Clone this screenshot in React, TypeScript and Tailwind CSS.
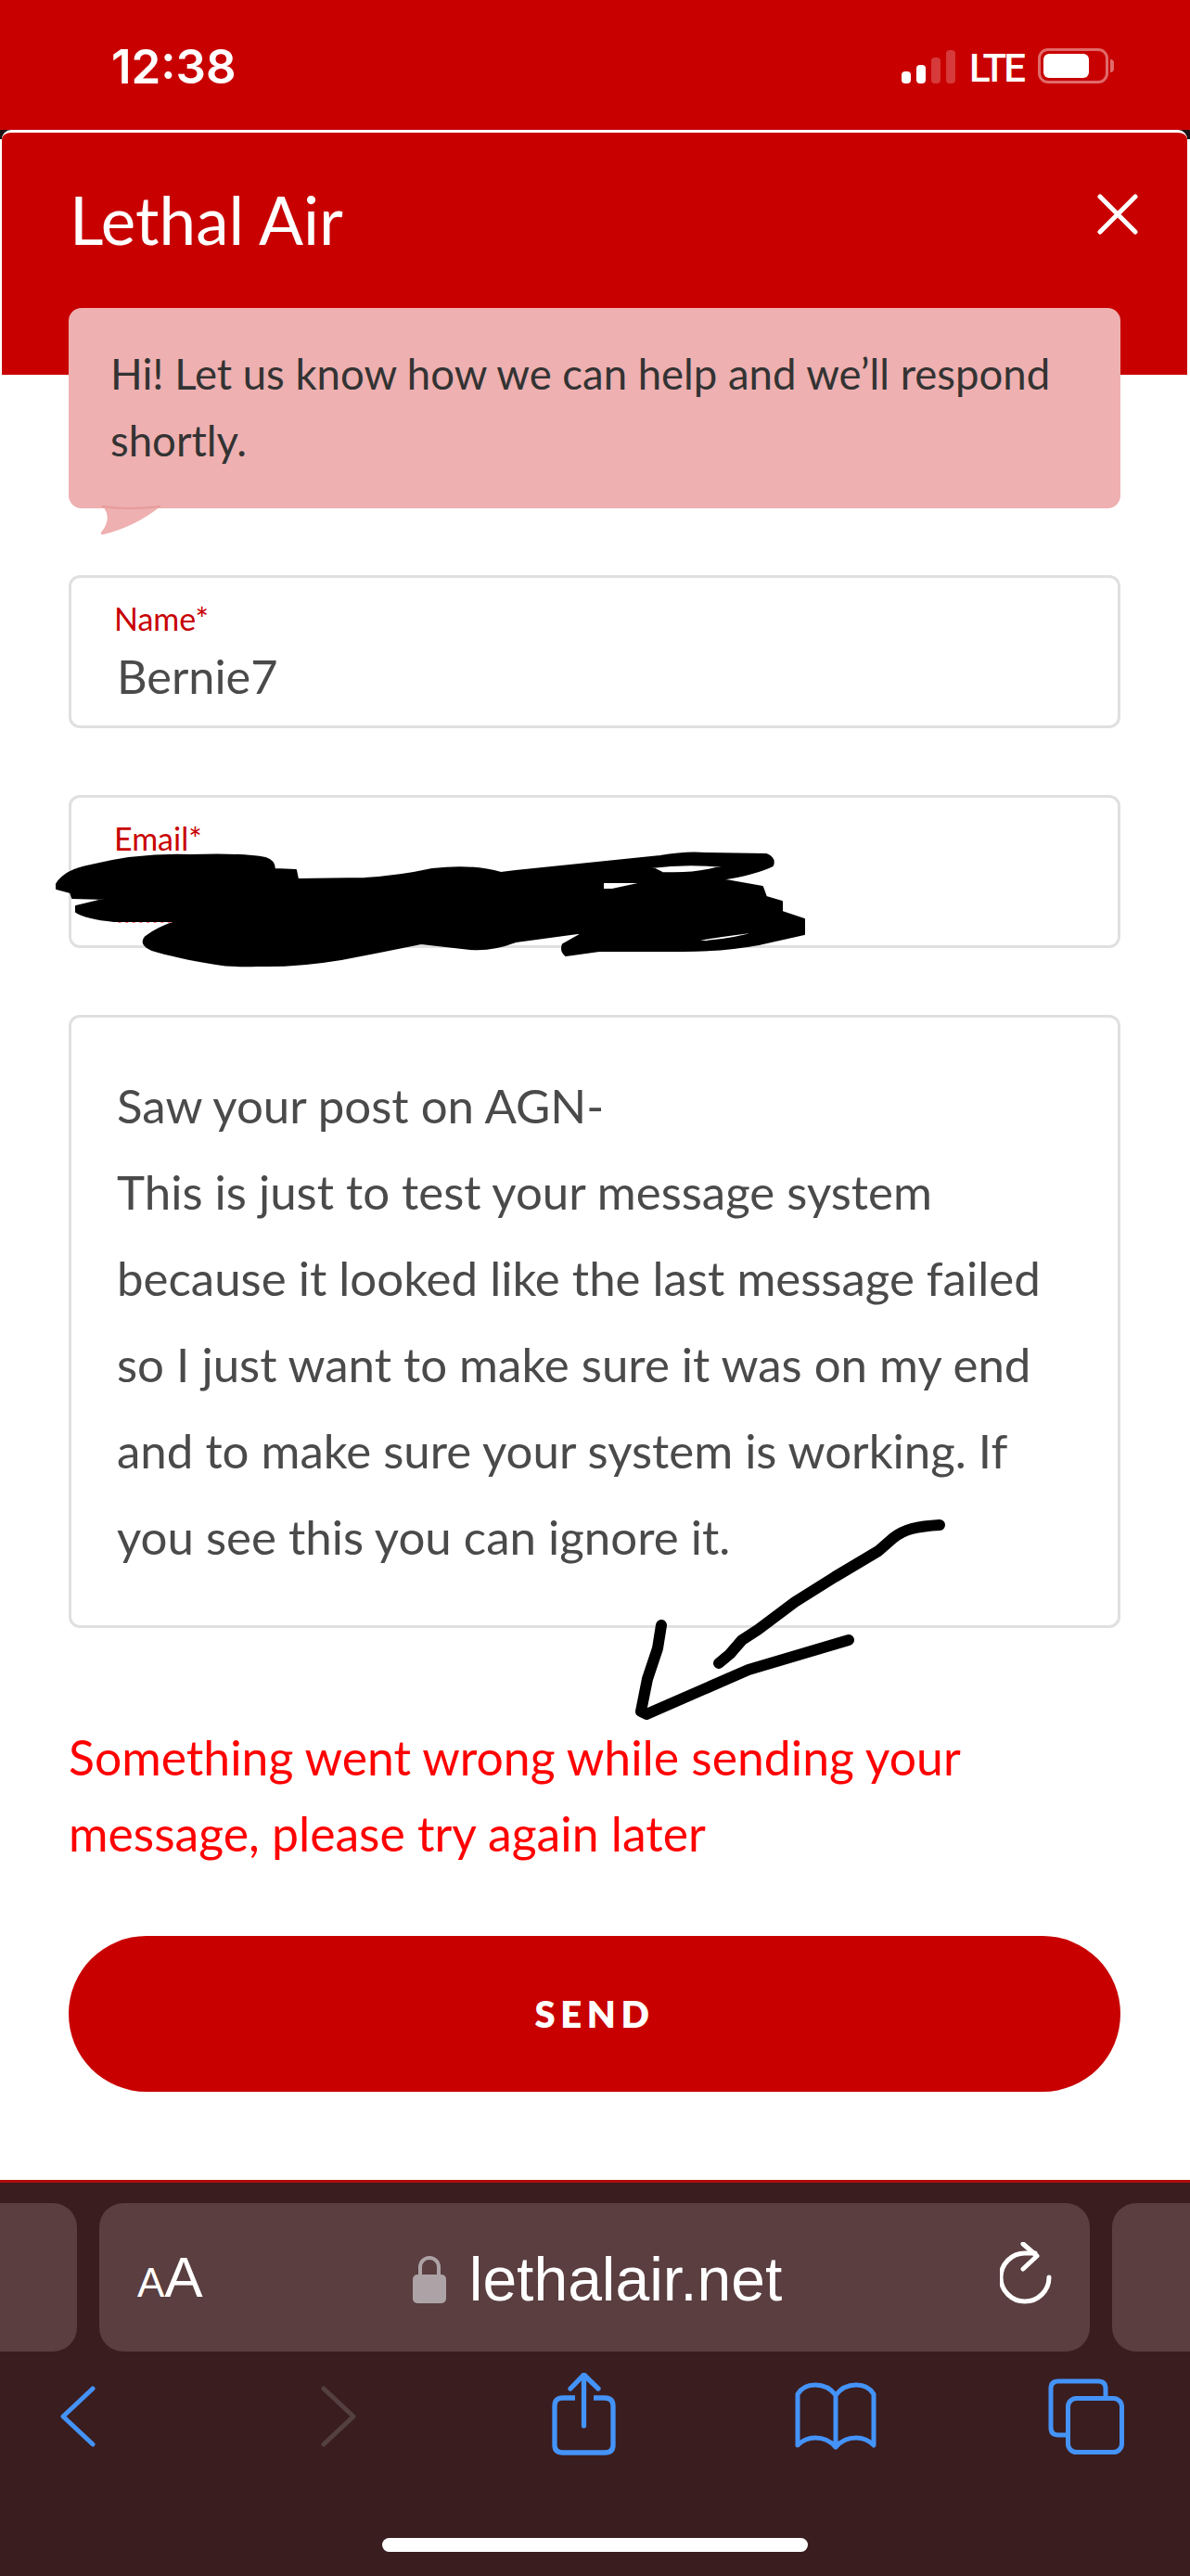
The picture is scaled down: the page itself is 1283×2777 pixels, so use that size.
const RED = 'bg-[#c80000]'

function Scribble() {
  return (
    <svg className="absolute left-0 top-[900px] pointer-events-none" width="900" height="150" viewBox="0 900 900 150">
      <path
        fillRule="evenodd"
        fill="#000"
        stroke="#000"
        strokeWidth="2"
        strokeLinejoin="round"
        d="M61 953 Q70 938 98 933 Q150 920 205 922 Q260 920 286 925 Q296 928 296 937 L319 938 L321 948 L393 947 Q430 945 466 937 Q510 932 540 941 L556 939 L712 923 Q740 918 761 920 L826 921 Q836 925 833 933 Q815 942 777 948 L822 956 L826 967 L843 972 L843 983 L867 991 L867 1007 Q845 1012 818 1018 Q780 1025 736 1025 L646 1025 L610 1030 Q604 1025 607 1018 L630 1005 L556 1015 Q530 1025 507 1023 Q480 1020 454 1017 Q410 1026 368 1034 Q320 1042 278 1041 Q250 1042 233 1039 Q190 1032 164 1024 Q150 1018 157 1010 Q170 1000 192 993 L123 993 Q92 990 82 983 L82 977 L115 969 L78 968 L76 962 L61 958 Z
           M702 935 Q740 930 779 934 Q750 943 714 941 Z
           M650 951 L697 951 L660 959 L650 959 Z
           M745 1014 Q790 1007 820 1004 Q790 1013 760 1015 Z"
      />
    </svg>
  )
}

function HandArrow() {
  return (
    <svg className="absolute left-[660px] top-[1620px] pointer-events-none" width="380" height="250" viewBox="660 1620 380 250" fill="none" stroke="#000" strokeWidth="12" strokeLinecap="round" strokeLinejoin="round">
      <path d="M1013 1644 Q995 1645 983 1648 Q972 1651 963 1658 L947 1672 L900 1700 L857 1727 L817 1757 L800 1768 L787 1783 L775 1793" />
      <path d="M713 1752 L709 1777 L698 1810 L691 1845 L697 1848 L807 1800 L915 1768" />
    </svg>
  )
}

function Field({ label, value }: { label: string; value?: string }) {
  return (
    <div className="h-[165px] border-[3px] border-[#e0e0e0] rounded-xl pl-[46px] pt-[24px] bg-white">
      <div className="text-[34px] leading-[40px] text-[#c80000]">{label}</div>
      <div className="text-[50.5px] leading-[60px] mt-[12px] ml-[3px] text-[#4a4a4a]">{value}</div>
    </div>
  )
}

function SafariBar() {
  return (
    <div className="h-[427px] bg-[#3a1d1f] border-t-[3px] border-[#b00d0d] font-['Liberation_Sans',sans-serif]">
      <div className="flex mt-[22px] h-[160px] gap-[24px]">
        <div className="w-[83px] shrink-0 bg-[#5a3e40] rounded-r-[26px]" />
        <div className="w-[1068px] shrink-0 bg-[#5a3e40] rounded-[26px] flex items-center relative">
          <div className="flex items-baseline ml-[41px] text-white">
            <span className="text-[44px] leading-none">A</span>
            <span className="text-[62px] leading-none">A</span>
          </div>
          <div className="flex items-center ml-[226px] mt-[4px] gap-[25px]">
            <svg width="36" height="52" viewBox="0 0 36 52">
              <path d="M8 24 V13 a10 10 0 0 1 20 0 V24" fill="none" stroke="#ada3a6" strokeWidth="4" />
              <rect x="0" y="21" width="36" height="31" rx="5" fill="#ada3a6" />
            </svg>
            <span className="text-[66px] leading-none text-white">lethalair.net</span>
          </div>
          <svg className="absolute left-[971px] top-[42px]" width="58" height="68" viewBox="0 0 58 68" fill="none" stroke="#fff" strokeWidth="5" strokeLinecap="round" strokeLinejoin="round">
            <path d="M53 38 A26 26 0 1 1 27 12 H38" />
            <path d="M25 2 L40 15 L25 29" />
          </svg>
        </div>
        <div className="flex-1 bg-[#5a3e40] rounded-l-[26px]" />
      </div>
      <div className="flex items-start ml-[65px] mt-[23px] h-[90px]">
        <svg className="mt-[14px]" width="38" height="66" viewBox="0 0 38 66" fill="none" stroke="#4493f8" strokeWidth="5" strokeLinecap="round" strokeLinejoin="round">
          <path d="M35 3 L3 33 L35 63" />
        </svg>
        <svg className="mt-[14px] ml-[243px]" width="38" height="66" viewBox="0 0 38 66" fill="none" stroke="#54403f" strokeWidth="5" strokeLinecap="round" strokeLinejoin="round">
          <path d="M3 3 L35 33 L3 63" />
        </svg>
        <svg className="ml-[211px]" width="69" height="89" viewBox="0 0 69 89" fill="none" stroke="#4493f8" strokeWidth="5.3" strokeLinejoin="round">
          <path d="M25 27 H12 Q3 27 3 36 V78 Q3 86 12 86 H57 Q66 86 66 78 V36 Q66 27 57 27 H45" />
          <path strokeLinecap="round" d="M34.5 57 V3 M20 17 L34.5 2 L50 17" />
        </svg>
        <svg className="mt-[10px] ml-[193px]" width="88" height="74" viewBox="0 0 88 74" fill="none" stroke="#4493f8" strokeWidth="5" strokeLinecap="round" strokeLinejoin="round">
          <path d="M44 14 C38 6 30 3 22 3 C14 3 7 6 3 13 V68 C8 63 15 60 22 60 C30 60 38 63 44 70 C50 63 58 60 66 60 C73 60 80 63 85 68 V13 C81 6 74 3 66 3 C58 3 50 6 44 14 V70" />
        </svg>
        <svg className="mt-[6px] ml-[185px]" width="83" height="82" viewBox="0 0 83 82" fill="none" stroke="#4493f8" strokeWidth="5" strokeLinejoin="round">
          <path d="M62 19 V11 Q62 3 54 3 H11 Q3 3 3 11 V53 Q3 61 11 61 H20" />
          <rect x="21.5" y="21.5" width="58" height="58" rx="9" />
        </svg>
      </div>
      <div className="mt-[88px] ml-[412px] w-[459px] h-[15px] rounded-full bg-white" />
    </div>
  )
}

export default function App() {
  return (
    <div className="w-[1283px] h-[2777px] relative flex flex-col overflow-hidden bg-white font-['Lato','Noto_Sans',sans-serif]">
      <div className={`${RED} h-[140px] flex items-center justify-between pl-[120px] pr-[82px] font-['Inter',sans-serif] text-white`}>
        <span className="text-[51px] font-semibold leading-none mt-[2px]">12:38</span>
        <div className="flex items-end mt-[2px]">
          <div className="flex items-end gap-[6px]">
            <i className="w-[10px] h-[13px] rounded-[4px] bg-white" />
            <i className="w-[10px] h-[20px] rounded-[4px] bg-white" />
            <i className="w-[10px] h-[28px] rounded-[4px] bg-[#d63a3a]" />
            <i className="w-[10px] h-[36px] rounded-[4px] bg-[#d63a3a]" />
          </div>
          <span className="ml-[15px] w-[59px] text-[42px] leading-[32px] font-medium tracking-[-3px] font-['Roboto',sans-serif]">LTE</span>
          <div className="ml-[15px] w-[76px] h-[38px] border-[3px] border-[#e06a6a] rounded-[11px] p-[3px]">
            <div className="w-[49px] h-full rounded-[6px] bg-white" />
          </div>
          <div className="ml-[2px] w-[4px] h-[14px] rounded-r-full bg-[#e06a6a] mb-[12px]" />
        </div>
      </div>

      <div className="flex-1 bg-[linear-gradient(#1c1214_10px,#fff_10px)]">
        <div className="h-full bg-white rounded-t-[10px] ml-[2px] mr-[3px] border-t-[3px] border-white overflow-hidden">
          <div className={`${RED} h-[261px] pl-[73px] pr-[53px] pt-[49px] flex justify-between items-start`}>
            <span className="text-[71px] leading-[90px] text-white">Lethal Air</span>
            <svg className="mt-[17px]" width="44" height="44" viewBox="0 0 44 44" stroke="#fff" strokeWidth="5" strokeLinecap="round">
              <path d="M3 3 L41 41 M41 3 L3 41" />
            </svg>
          </div>
          <div className="px-[72px]">
            <div className="relative -mt-[72px] bg-[#eeb0b0] rounded-[14px] h-[216px] pl-[45px] pr-[30px] pt-[35px] text-[45.5px] leading-[72px] text-[#333]">
              Hi! Let us know how we can help and we’ll respond shortly.
              <svg className="absolute left-[34px] top-[212px] overflow-visible" width="68" height="36" viewBox="0 0 68 36">
                <path d="M2 1 Q14 14 1 30 Q0 33 4 32 Q37 24 65 2 Z" fill="#eeb0b0" />
                <path d="M2 2 Q30 6 65 2" fill="none" stroke="#e79a9a" strokeWidth="2" />
              </svg>
            </div>
            <div className="mt-[72px]">
              <Field label="Name*" value="Bernie7" />
            </div>
            <div className="mt-[72px] relative">
              <Field label="Email*" />
              <div className="absolute left-[53px] top-[134px] w-[65px] border-b-[4px] border-dotted border-[#f55]" />
            </div>
            <div className="mt-[72px] h-[661px] border-[3px] border-[#e0e0e0] rounded-xl pl-[49px] pt-[48px] pr-[60px] text-[51px] leading-[93px] text-[#4a4a4a]">
              Saw your post on AGN-
              <br />
              This is just to test your message system because it looked like the last message failed so I just want to make sure it was on my end and to make sure your system is working. If you see this you can ignore it.
            </div>
            <p className="mt-[98px] text-[51.7px] leading-[82px] text-[#f00]">
              Something went wrong while sending your message, please try again later
            </p>
            <div className={`${RED} mt-[70px] h-[168px] rounded-full flex items-center justify-center text-white font-extrabold text-[40px] tracking-[0.14em]`}>
              SEND
            </div>
          </div>
        </div>
      </div>

      <SafariBar />
      <Scribble />
      <HandArrow />
    </div>
  )
}
